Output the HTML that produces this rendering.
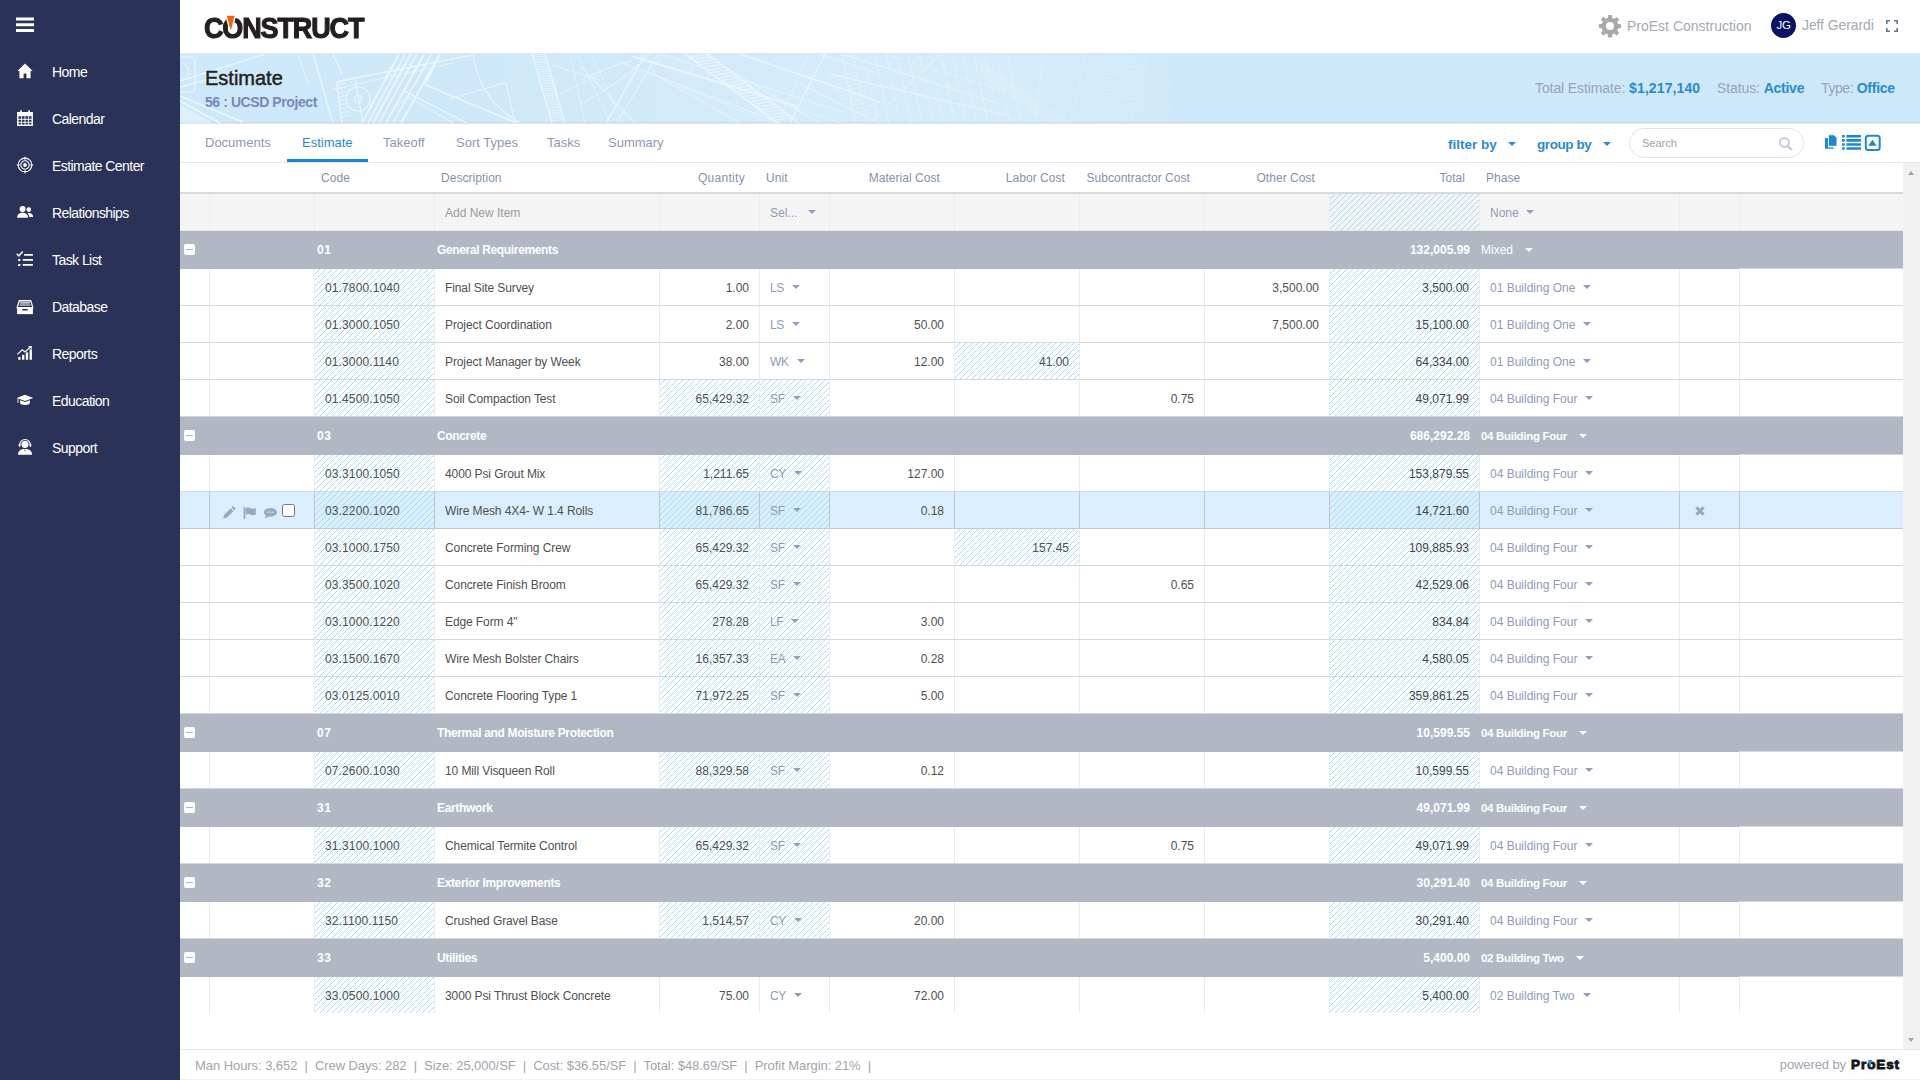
<!DOCTYPE html><html lang="en"><head><meta charset="utf-8"><title>Estimate - 56 : UCSD Project</title><style>
*{box-sizing:border-box;margin:0;padding:0}
html,body{width:1920px;height:1080px;overflow:hidden;background:#fff;font-family:"Liberation Sans",sans-serif;}
body{position:relative;color:#555}
.abs{position:absolute}
#side{position:absolute;left:0;top:0;width:180px;height:1080px;background:#2a3257}
.nav{position:absolute;left:0;width:180px;height:47px;color:#fff;font-size:14px;letter-spacing:-0.56px;line-height:47px}
.nav span{position:absolute;left:52px;top:0;white-space:nowrap}
.nav svg{position:absolute;left:16px;top:13px;width:18px;height:18px;fill:#fff}
#top{position:absolute;left:180px;top:0;width:1740px;height:54px;background:#fff;border-bottom:1px solid #e4e5e8}
#logo{position:absolute;left:24px;top:11px;font-weight:700;font-size:29px;line-height:34px;color:#231f20;letter-spacing:-1.2px;transform-origin:0 50%;transform:scaleX(.93);-webkit-text-stroke:1.1px #231f20;white-space:nowrap}
#banner{position:absolute;left:180px;top:54px;width:1740px;height:69px;background:#cde8f9;overflow:hidden;box-shadow:inset 0 -1px 0 #c3dcec}
#banner h1{position:absolute;left:25px;top:11px;font-size:20px;font-weight:400;color:#222;line-height:26px;-webkit-text-stroke:.45px #222;white-space:nowrap}
#banner h2{position:absolute;left:25px;top:38px;font-size:14px;font-weight:700;color:#7b86ba;line-height:20px;letter-spacing:-0.42px;white-space:nowrap}
.stat{position:absolute;top:24px;font-size:14px;line-height:20px;color:#98a2b8;white-space:nowrap;letter-spacing:-0.1px}
.stat b{color:#2b8ad2;font-weight:700;letter-spacing:-0.25px}
#tabs{position:absolute;left:180px;top:123px;width:1740px;height:40px;background:#fff;border-top:1px solid #e3e4e6;border-bottom:1px solid #e4e6ee}
.tab{position:absolute;top:-1px;height:39px;line-height:40px;font-size:13px;color:#8d99b3;white-space:nowrap}
.tab.on{color:#2b8ad2}
.tabline{position:absolute;top:35px;height:3px;background:#1b88d3}
.dd{position:absolute;top:0;line-height:41px;font-size:13.5px;font-weight:700;color:#2b8ad2;white-space:nowrap;letter-spacing:-0.3px}
.tri{display:inline-block;vertical-align:top;width:0;height:0;border-left:4px solid transparent;border-right:4px solid transparent;border-top:4px solid #919dba}
#search{position:absolute;left:1449px;top:4px;width:175px;height:30px;border:1px solid #dfe2ea;border-radius:15px;font-size:11px;color:#a3a3a3;line-height:28px;padding-left:12px}
#thead{position:absolute;left:180px;top:163px;width:1723px;height:31px;background:#fff;border-bottom:2px solid #d9d9d9}
.th{position:absolute;top:0;height:29px;line-height:30px;font-size:12px;color:#8491ad;white-space:nowrap;letter-spacing:.05px}
.row{position:absolute;left:180px;width:1723px;font-size:12px}
.cell{position:absolute;top:0;height:100%;border-right:1px solid #eaebee;white-space:nowrap;line-height:38px;color:#505050;overflow:visible}
.item{height:37px;border-bottom:1px solid #d4d7dc;background:#fff}
.item .cell{height:36px}
.hatch{background-image:repeating-linear-gradient(135deg,transparent 0,transparent 3.24px,#9fddf6 3.24px,#9fddf6 4.24px)}
.grp{height:38px;background:#b1b8c3;color:#fff;font-weight:700;line-height:39px;font-size:12px}
.grp span{position:absolute;top:0;white-space:nowrap;letter-spacing:-0.35px}
.grp .tail{position:absolute;left:1559px;top:37px;width:164px;height:1px;background:#d5d8de}
.minus{position:absolute;left:4px;top:13px;width:11px;height:11px;background:#fff;border-radius:2px}
.minus:after{content:"";position:absolute;left:2px;top:5px;width:7px;height:1.4px;background:#aeb5c0}
.num{text-align:right;padding-right:10px}
.txt{padding-left:10px}
.ph{color:#8e9bb8}
.ph .tri{margin:16px 0 0 8px}
.unit{letter-spacing:-0.3px}
.code{letter-spacing:.12px}
.desc{letter-spacing:-0.1px}
.last{border-bottom-color:transparent}
.hl{background:#daeefe;border-bottom-color:#c6c9cc}
.hl .cell{border-right-color:#bfc2c6}
#addrow{background:#f4f4f4;height:37px;border-bottom:1px solid #e9e9ea}
#addrow .cell{height:36px;border-right-color:#ececee;color:#9a9a9a}
#addrow .ph{color:#8e9bb8}
#vs{position:absolute;left:1903px;top:163px;width:17px;height:886px;background:#f1f1f1}
#foot{position:absolute;left:180px;top:1049px;width:1740px;height:31px;border-top:1px solid #e6e8ec;background:#fff;font-size:13px;color:#a1a4aa;line-height:30px;white-space:nowrap;letter-spacing:-0.06px;box-shadow:inset 0 -1px 0 #f0f0f0}
</style></head><body>
<div id="side">
<svg class="abs" style="left:16px;top:17px" width="18" height="16" viewBox="0 0 18 16"><path d="M0 2h18M0 7.700h18M0 13.500h18" stroke="#fff" stroke-width="3"/></svg>
<div class="nav" style="top:49px"><svg viewBox="0 0 20 20" overflow="visible"><g transform="translate(0 -.6) scale(1 1.09)"><path d="M10 2.2 1.5 9.6h2.3V17h4.6v-4.8h3.2V17h4.6V9.6h2.3z"/></g></svg><span>Home</span></div>
<div class="nav" style="top:96px"><svg viewBox="0 0 20 20" overflow="visible"><path d="M2 4h16v14H2z" fill="none" stroke="#fff" stroke-width="1.6"/><path d="M2 4h16v4H2z"/><path d="M5.5 1.5v4M14.5 1.5v4" stroke="#fff" stroke-width="1.8"/><path d="M6 8v10M10 8v10M14 8v10M2 11.5h16M2 14.8h16" stroke="#fff" stroke-width="1"/></svg><span>Calendar</span></div>
<div class="nav" style="top:143px"><svg viewBox="0 0 20 20" overflow="visible"><circle cx="10" cy="10" r="7.600" fill="none" stroke="#fff" stroke-width="1.200"/><circle cx="10" cy="10" r="4.700" fill="none" stroke="#fff" stroke-width="1.200"/><circle cx="10" cy="10" r="2.100"/><path d="M10 .8v3.400M10 15.800v3.400M.8 10h3.400M15.800 10h3.400" stroke="#fff" stroke-width="1.300"/></svg><span>Estimate Center</span></div>
<div class="nav" style="top:190px"><svg viewBox="0 0 20 20" overflow="visible"><circle cx="7.3" cy="6.6" r="3.3"/><path d="M1.2 16.5c0-4.2 2.6-5.8 6.1-5.8s6.1 1.6 6.1 5.8z"/><circle cx="14.2" cy="7.3" r="2.6"/><path d="M14.4 11c2.8 0 4.6 1.5 4.6 4.6h-4.4c0-1.9-.6-3.3-1.8-4.3.5-.2 1-.3 1.6-.3z"/></svg><span>Relationships</span></div>
<div class="nav" style="top:237px"><svg viewBox="0 0 20 20" overflow="visible"><g transform="translate(0 1.2)"><path d="M9 4.200h9.800M7.500 9.800h11.300M7.500 15.400h11.300" stroke="#fff" stroke-width="1.900"/><path d="M.8 3l2.400 2.400 4.200-5" fill="none" stroke="#fff" stroke-width="1.700"/><rect x="2.4" y="8.7" width="2.4" height="2.4"/><rect x="2.4" y="14.3" width="2.4" height="2.4"/></g></svg><span>Task List</span></div>
<div class="nav" style="top:284px"><svg viewBox="0 0 20 20" overflow="visible"><g transform="translate(0 1) scale(1 1.06)"><path d="M3.6 3h12.8l2.3 7.2H1.3z" fill="none" stroke="#fff" stroke-width="1.4"/><path d="M4.6 5.2h10.8M4 7.4h12" stroke="#fff" stroke-width="1.2"/><path d="M1.2 10h17.6v7H1.2z"/><rect x="7" y="11.6" width="6" height="1.6" fill="#2a3257"/></g></svg><span>Database</span></div>
<div class="nav" style="top:331px"><svg viewBox="0 0 20 20" overflow="visible"><rect x="2.5" y="14.4" width="2.6" height="3.1"/><rect x="6.7" y="12" width="2.6" height="5.5"/><rect x="10.9" y="9.4" width="2.6" height="8.1"/><rect x="15.1" y="6" width="2.6" height="11.5"/><path d="M1.5 11.6 7 6.4l3 2.4 6.6-6" fill="none" stroke="#fff" stroke-width="1.3"/><path d="M13.5 2.2h4v4z"/></svg><span>Reports</span></div>
<div class="nav" style="top:378px"><svg viewBox="0 0 20 20" overflow="visible"><path d="M10 4.2 0.8 7.7 10 11.2l9.2-3.5z"/><path d="M4.6 10.2v3.2c0 1.2 2.4 2.2 5.4 2.2s5.4-1 5.4-2.2v-3.2L10 12.3z"/><path d="M2.2 8.4v4.8" stroke="#fff" stroke-width="1"/></svg><span>Education</span></div>
<div class="nav" style="top:425px"><svg viewBox="0 0 20 20" overflow="visible"><circle cx="10" cy="7" r="4"/><path d="M2.2 18.5c0-4.4 3.2-6.3 7.8-6.3s7.8 1.9 7.8 6.3z"/><path d="M4.2 7.4a5.8 5.8 0 0 1 11.6 0" fill="none" stroke="#fff" stroke-width="1.2"/><rect x="3" y="6.4" width="2" height="3.4" rx=".8"/><rect x="15" y="6.4" width="2" height="3.4" rx=".8"/><path d="M9.2 13l.8 2.6.8-2.6z" fill="#2a3257"/></svg><span>Support</span></div>
</div>
<div id="top"><div id="logo">CONSTRUCT</div>
<svg class="abs" style="left:45px;top:14px" width="12" height="17" viewBox="0 0 12 17"><path d="M1.6 1.600h8.200L6.400 15.600h-1.200z" fill="#fff" stroke="#fff" stroke-width="2.400" stroke-linejoin="round"/><path d="M1.800 1.700h7.800L6.200 15.200h-.9z" fill="#f4640f"/></svg>
<svg class="abs" style="left:1418px;top:14px" width="24" height="24" viewBox="0 0 24 24"><path fill="#a9a9a9" d="M10.2 1h3.6l.5 3.1 1.9.8 2.5-1.9 2.5 2.5-1.9 2.5.8 1.9 3.1.5v3.6l-3.1.5-.8 1.9 1.9 2.5-2.5 2.5-2.5-1.9-1.9.8-.5 3.1h-3.6l-.5-3.1-1.9-.8-2.5 1.9-2.5-2.5 1.9-2.5-.8-1.9L.8 13.8v-3.6l3.1-.5.8-1.9-1.9-2.5 2.5-2.5 2.5 1.9 1.9-.8zM12 8a4 4 0 1 0 0 8 4 4 0 0 0 0-8z"/></svg>
<div class="abs" style="left:1447px;top:15px;font-size:14px;line-height:22px;color:#a4a9b3;white-space:nowrap">ProEst Construction</div>
<div class="abs" style="left:1591px;top:13px;width:25px;height:25px;border-radius:50%;background:#0b1367;color:#fff;font-size:11.5px;line-height:25px;text-align:center;letter-spacing:-0.3px">JG</div>
<div class="abs" style="left:1622px;top:14px;font-size:14px;line-height:22px;color:#a4a9b3;letter-spacing:-0.1px;white-space:nowrap">Jeff Gerardi</div>
<svg class="abs" style="left:1706px;top:20px" width="12" height="12" viewBox="0 0 12 12"><path d="M.8 4V.8H4M8 .8h3.2V4M11.2 8v3.2H8M4 11.2H.8V8" fill="none" stroke="#68738e" stroke-width="1.6"/></svg>
</div>
<div id="banner">
<svg class="abs" style="left:0;top:0" width="996" height="69" viewBox="0 0 996 69"><defs><linearGradient id="fd" x1="0" x2="1"><stop offset="0" stop-color="#fff" stop-opacity=".66"/><stop offset=".5" stop-color="#fff" stop-opacity=".6"/><stop offset=".85" stop-color="#fff" stop-opacity=".42"/><stop offset="1" stop-color="#fff" stop-opacity=".22"/></linearGradient><mask id="mk"><rect width="996" height="69" fill="url(#fd)"/></mask></defs><linearGradient id="ws" x1="0" x2="1"><stop offset=".25" stop-color="#fff" stop-opacity="0"/><stop offset=".5" stop-color="#fff" stop-opacity=".1"/><stop offset=".8" stop-color="#fff" stop-opacity=".14"/><stop offset="1" stop-color="#fff" stop-opacity=".06"/></linearGradient><rect width="992" height="69" fill="url(#ws)"/><polygon points="0,50.500 33,69 0,69" fill="#fff" fill-opacity=".35"/><g fill="none" stroke="#fff" mask="url(#mk)"><path d="M0.0 27.0L85.0 0.0" stroke-width="1.375"/><path d="M0.0 33.0L61.0 16.6" stroke-width="1.375"/><path d="M0.0 42.0L63.0 68.0" stroke-width="1.375"/><path d="M0.0 47.0L40.0 69.0" stroke-width="1.75"/><path d="M-4 3h15a4 4 0 0 1 4 4v27a4 4 0 0 1-4 4h-15" stroke-width="1.2"/><path d="M2 8q8 4 6 14" stroke-width="1"/><path d="M133.0 0.0L153.0 69.0" stroke-width="1.375"/><path d="M153.0 0.0L162.0 20.0" stroke-width="1.375"/><path d="M118.0 0.0L128.0 30.0" stroke-width="1.0" stroke-opacity="0.7"/><path d="M156.500 28.600 175 24 183 69M156.500 28.600 162 69" stroke-width="1.3"/><path d="M157.0 31.0L166.0 29.0" stroke-width="1.125" stroke-opacity="0.8"/><path d="M157.6 35.0L166.6 33.0" stroke-width="1.125" stroke-opacity="0.8"/><path d="M158.1 39.0L167.1 37.0" stroke-width="1.125" stroke-opacity="0.8"/><path d="M158.7 43.0L167.7 41.0" stroke-width="1.125" stroke-opacity="0.8"/><path d="M159.2 47.0L168.2 45.0" stroke-width="1.125" stroke-opacity="0.8"/><path d="M159.8 51.0L168.8 49.0" stroke-width="1.125" stroke-opacity="0.8"/><path d="M160.3 55.0L169.3 53.0" stroke-width="1.125" stroke-opacity="0.8"/><path d="M160.9 59.0L169.9 57.0" stroke-width="1.125" stroke-opacity="0.8"/><path d="M161.4 63.0L170.4 61.0" stroke-width="1.125" stroke-opacity="0.8"/><path d="M166 45a12 12 0 1 0 24 0a12 12 0 1 0-24 0M174.500 45a3.500 3.500 0 1 0 7 0a3.500 3.500 0 1 0-7 0" stroke-width="1.2"/><path d="M182.0 69.0L219.0 0.0" stroke-width="1.875"/><path d="M188.0 69.0L225.3 0.0" stroke-width="1.5"/><path d="M193.0 69.0L230.6 0.0" stroke-width="1.875"/><path d="M199.0 69.0L236.8 0.0" stroke-width="1.5"/><path d="M206.0 69.0L244.2 0.0" stroke-width="1.875"/><path d="M213.0 69.0L251.6 0.0" stroke-width="1.5"/><path d="M221.0 69.0L259.9 0.0" stroke-width="1.875"/><path d="M157.5 27.5L291.0 1.3" stroke-width="1.375"/><path d="M153.0 35.0L273.5 9.0" stroke-width="1.125" stroke-opacity="0.8"/><path d="M245.0 30.8L260.0 1.3" stroke-width="1.375"/><path d="M245.0 30.8L337.0 69.0" stroke-width="1.625"/><path d="M225.0 37.4L286.6 69.0" stroke-width="1.375"/><path d="M216.600 52.700 227.500 42.900 273.500 69" stroke-width="1"/><path d="M293 0Q300 48 341 69" stroke-width="1.1"/><path d="M269 45 326 28.600 335 69" stroke-width="1"/><path d="M352 0 372 69M365 0 385 69" stroke-width="1.3"/><path d="M353.0 1.0L365.0 -0.5" stroke-width="0.875" stroke-opacity="0.8"/><path d="M353.7 3.4L365.7 1.9" stroke-width="0.875" stroke-opacity="0.8"/><path d="M354.4 5.9L366.4 4.4" stroke-width="0.875" stroke-opacity="0.8"/><path d="M355.1 8.3L367.1 6.8" stroke-width="0.875" stroke-opacity="0.8"/><path d="M355.9 10.7L367.9 9.2" stroke-width="0.875" stroke-opacity="0.8"/><path d="M356.6 13.1L368.6 11.6" stroke-width="0.875" stroke-opacity="0.8"/><path d="M357.3 15.6L369.3 14.1" stroke-width="0.875" stroke-opacity="0.8"/><path d="M358.0 18.0L370.0 16.5" stroke-width="0.875" stroke-opacity="0.8"/><path d="M358.7 20.4L370.7 18.9" stroke-width="0.875" stroke-opacity="0.8"/><path d="M359.4 22.9L371.4 21.4" stroke-width="0.875" stroke-opacity="0.8"/><path d="M360.1 25.3L372.1 23.8" stroke-width="0.875" stroke-opacity="0.8"/><path d="M360.9 27.7L372.9 26.2" stroke-width="0.875" stroke-opacity="0.8"/><path d="M361.6 30.1L373.6 28.6" stroke-width="0.875" stroke-opacity="0.8"/><path d="M362.3 32.6L374.3 31.1" stroke-width="0.875" stroke-opacity="0.8"/><path d="M363.0 35.0L375.0 33.5" stroke-width="0.875" stroke-opacity="0.8"/><path d="M363.7 37.4L375.7 35.9" stroke-width="0.875" stroke-opacity="0.8"/><path d="M364.4 39.9L376.4 38.4" stroke-width="0.875" stroke-opacity="0.8"/><path d="M365.1 42.3L377.1 40.8" stroke-width="0.875" stroke-opacity="0.8"/><path d="M365.9 44.7L377.9 43.2" stroke-width="0.875" stroke-opacity="0.8"/><path d="M366.6 47.1L378.6 45.6" stroke-width="0.875" stroke-opacity="0.8"/><path d="M367.3 49.6L379.3 48.1" stroke-width="0.875" stroke-opacity="0.8"/><path d="M368.0 52.0L380.0 50.5" stroke-width="0.875" stroke-opacity="0.8"/><path d="M368.7 54.4L380.7 52.9" stroke-width="0.875" stroke-opacity="0.8"/><path d="M369.4 56.9L381.4 55.4" stroke-width="0.875" stroke-opacity="0.8"/><path d="M370.1 59.3L382.1 57.8" stroke-width="0.875" stroke-opacity="0.8"/><path d="M370.9 61.7L382.9 60.2" stroke-width="0.875" stroke-opacity="0.8"/><path d="M371.6 64.1L383.6 62.6" stroke-width="0.875" stroke-opacity="0.8"/><path d="M372.3 66.6L384.3 65.1" stroke-width="0.875" stroke-opacity="0.8"/><path d="M372.0 11.0L420.0 26.0" stroke-width="1.125" stroke-opacity="0.8"/><path d="M380.0 40.0L420.0 20.0" stroke-width="1.125" stroke-opacity="0.7"/><path d="M390.0 0.0L405.0 69.0" stroke-width="1.0" stroke-opacity="0.7"/><path d="M398.0 0.0L430.0 69.0" stroke-width="1.0" stroke-opacity="0.6"/><path d="M400 26Q430 12 452.500 6.700" stroke-width="1"/><path d="M400 50Q440 30 470 0" stroke-width="1"/><path d="M426.0 69.0L465.6 0.0" stroke-width="1.5"/><path d="M437.0 69.0L478.0 0.0" stroke-width="1.125" stroke-opacity="0.8"/><path d="M452.5 2.4L619.0 52.7" stroke-width="1.625"/><path d="M440.0 8.0L600.0 69.0" stroke-width="1.125" stroke-opacity="0.8"/><path d="M470.0 18.0L560.0 69.0" stroke-width="1.125" stroke-opacity="0.7"/><path d="M505 0 597 69M527 0 619 69" stroke-width="1.5"/><path d="M506.0 0.0L526.0 -3.0" stroke-width="1.375" stroke-opacity="0.75"/><path d="M509.5 2.7L529.5 -0.3" stroke-width="1.375" stroke-opacity="0.75"/><path d="M513.1 5.3L533.1 2.3" stroke-width="1.375" stroke-opacity="0.75"/><path d="M516.6 8.0L536.6 5.0" stroke-width="1.375" stroke-opacity="0.75"/><path d="M520.2 10.6L540.2 7.6" stroke-width="1.375" stroke-opacity="0.75"/><path d="M523.7 13.3L543.7 10.3" stroke-width="1.375" stroke-opacity="0.75"/><path d="M527.2 15.9L547.2 12.9" stroke-width="1.375" stroke-opacity="0.75"/><path d="M530.8 18.6L550.8 15.6" stroke-width="1.375" stroke-opacity="0.75"/><path d="M534.3 21.2L554.3 18.2" stroke-width="1.375" stroke-opacity="0.75"/><path d="M537.8 23.9L557.8 20.9" stroke-width="1.375" stroke-opacity="0.75"/><path d="M541.4 26.5L561.4 23.5" stroke-width="1.375" stroke-opacity="0.75"/><path d="M544.9 29.2L564.9 26.2" stroke-width="1.375" stroke-opacity="0.75"/><path d="M548.5 31.8L568.5 28.8" stroke-width="1.375" stroke-opacity="0.75"/><path d="M552.0 34.5L572.0 31.5" stroke-width="1.375" stroke-opacity="0.75"/><path d="M555.5 37.2L575.5 34.2" stroke-width="1.375" stroke-opacity="0.75"/><path d="M559.1 39.8L579.1 36.8" stroke-width="1.375" stroke-opacity="0.75"/><path d="M562.6 42.5L582.6 39.5" stroke-width="1.375" stroke-opacity="0.75"/><path d="M566.2 45.1L586.2 42.1" stroke-width="1.375" stroke-opacity="0.75"/><path d="M569.7 47.8L589.7 44.8" stroke-width="1.375" stroke-opacity="0.75"/><path d="M573.2 50.4L593.2 47.4" stroke-width="1.375" stroke-opacity="0.75"/><path d="M576.8 53.1L596.8 50.1" stroke-width="1.375" stroke-opacity="0.75"/><path d="M580.3 55.7L600.3 52.7" stroke-width="1.375" stroke-opacity="0.75"/><path d="M583.8 58.4L603.8 55.4" stroke-width="1.375" stroke-opacity="0.75"/><path d="M587.4 61.0L607.4 58.0" stroke-width="1.375" stroke-opacity="0.75"/><path d="M590.9 63.7L610.9 60.7" stroke-width="1.375" stroke-opacity="0.75"/><path d="M594.5 66.3L614.5 63.3" stroke-width="1.375" stroke-opacity="0.75"/><path d="M560.0 0.0L700.0 48.0" stroke-width="1.5"/><path d="M540.0 10.0L640.0 69.0" stroke-width="1.125" stroke-opacity="0.7"/><path d="M610.0 69.0L645.0 0.0" stroke-width="1.375"/><path d="M598.0 69.0L628.0 0.0" stroke-width="1.0" stroke-opacity="0.7"/><path d="M620.0 30.0L700.0 69.0" stroke-width="1.125" stroke-opacity="0.7"/><path d="M640.0 0.0L700.0 20.0" stroke-width="1.125" stroke-opacity="0.7"/><path d="M662.0 0.0L676.0 69.0" stroke-width="1.0" stroke-opacity="0.8"/><path d="M673.0 0.0L687.0 69.0" stroke-width="1.0" stroke-opacity="0.55"/><path d="M684.0 0.0L698.0 69.0" stroke-width="1.0" stroke-opacity="0.55"/><path d="M695.0 0.0L709.0 69.0" stroke-width="1.0" stroke-opacity="0.8"/><path d="M706.0 0.0L720.0 69.0" stroke-width="1.0" stroke-opacity="0.55"/><path d="M717.0 0.0L731.0 69.0" stroke-width="1.0" stroke-opacity="0.55"/><path d="M728.0 0.0L742.0 69.0" stroke-width="1.0" stroke-opacity="0.8"/><path d="M739.0 0.0L753.0 69.0" stroke-width="1.0" stroke-opacity="0.55"/><path d="M750.0 0.0L764.0 69.0" stroke-width="1.0" stroke-opacity="0.55"/><path d="M761.0 0.0L775.0 69.0" stroke-width="1.0" stroke-opacity="0.8"/><path d="M772.0 0.0L786.0 69.0" stroke-width="1.0" stroke-opacity="0.55"/><path d="M783.0 0.0L797.0 69.0" stroke-width="1.0" stroke-opacity="0.55"/><path d="M794.0 0.0L808.0 69.0" stroke-width="1.0" stroke-opacity="0.8"/><path d="M805.0 0.0L819.0 69.0" stroke-width="1.0" stroke-opacity="0.55"/><path d="M816.0 0.0L830.0 69.0" stroke-width="1.0" stroke-opacity="0.55"/><path d="M827.0 0.0L841.0 69.0" stroke-width="1.0" stroke-opacity="0.8"/><path d="M650.0 20.0L830.0 62.0" stroke-width="1.375" stroke-opacity="0.8"/><path d="M662.0 0.0L820.0 50.0" stroke-width="1.75" stroke-opacity="0.7"/><path d="M690.0 69.0L760.0 0.0" stroke-width="1.125" stroke-opacity="0.6"/><path d="M648.0 24.0L676.0 18.0" stroke-width="0.875" stroke-opacity="0.6"/><path d="M650.2 27.6L678.2 21.6" stroke-width="0.875" stroke-opacity="0.6"/><path d="M652.4 31.2L680.4 25.2" stroke-width="0.875" stroke-opacity="0.6"/><path d="M654.6 34.8L682.6 28.8" stroke-width="0.875" stroke-opacity="0.6"/><path d="M656.8 38.4L684.8 32.4" stroke-width="0.875" stroke-opacity="0.6"/><path d="M659.0 42.0L687.0 36.0" stroke-width="0.875" stroke-opacity="0.6"/><path d="M661.2 45.6L689.2 39.6" stroke-width="0.875" stroke-opacity="0.6"/><path d="M663.4 49.2L691.4 43.2" stroke-width="0.875" stroke-opacity="0.6"/><path d="M665.6 52.8L693.6 46.8" stroke-width="0.875" stroke-opacity="0.6"/><path d="M667.8 56.4L695.8 50.4" stroke-width="0.875" stroke-opacity="0.6"/><path d="M670.0 60.0L698.0 54.0" stroke-width="0.875" stroke-opacity="0.6"/><path d="M672.2 63.6L700.2 57.6" stroke-width="0.875" stroke-opacity="0.6"/><path d="M400.0 12.0L455.0 69.0" stroke-width="1.125" stroke-opacity="0.7"/><path d="M412.0 0.0L442.0 69.0" stroke-width="1.0" stroke-opacity="0.6"/><path d="M480.0 0.0L664.0 58.0" stroke-width="1.125" stroke-opacity="0.7"/><path d="M500.0 32.0L590.0 69.0" stroke-width="1.0" stroke-opacity="0.6"/><path d="M705.0 0.0L820.0 36.0" stroke-width="1.125" stroke-opacity="0.6"/><path d="M730.0 69.0L800.0 14.0" stroke-width="1.0" stroke-opacity="0.5"/><path d="M575.0 40.0L660.0 69.0" stroke-width="1.0" stroke-opacity="0.6"/><path d="M460.0 4.7L463.0 -2.3" stroke-width="1.125" stroke-opacity="0.7"/><path d="M476.7 9.7L479.7 2.7" stroke-width="1.125" stroke-opacity="0.7"/><path d="M493.3 14.7L496.3 7.7" stroke-width="1.125" stroke-opacity="0.7"/><path d="M510.0 19.7L513.0 12.7" stroke-width="1.125" stroke-opacity="0.7"/><path d="M526.7 24.7L529.7 17.7" stroke-width="1.125" stroke-opacity="0.7"/><path d="M543.3 29.7L546.3 22.7" stroke-width="1.125" stroke-opacity="0.7"/><path d="M560.0 34.7L563.0 27.7" stroke-width="1.125" stroke-opacity="0.7"/><path d="M576.7 39.7L579.7 32.7" stroke-width="1.125" stroke-opacity="0.7"/><path d="M593.3 44.7L596.3 37.7" stroke-width="1.125" stroke-opacity="0.7"/><path d="M668.0 2.0L670.5 -4.0" stroke-width="1.0" stroke-opacity="0.6"/><path d="M688.0 8.3L690.5 2.3" stroke-width="1.0" stroke-opacity="0.6"/><path d="M708.0 14.6L710.5 8.6" stroke-width="1.0" stroke-opacity="0.6"/><path d="M728.0 20.9L730.5 14.9" stroke-width="1.0" stroke-opacity="0.6"/><path d="M748.0 27.1L750.5 21.1" stroke-width="1.0" stroke-opacity="0.6"/><path d="M768.0 33.4L770.5 27.4" stroke-width="1.0" stroke-opacity="0.6"/><path d="M788.0 39.7L790.5 33.7" stroke-width="1.0" stroke-opacity="0.6"/><path d="M800 6 892 69 868 69 800 22z" fill="#fff" fill-opacity="0.32" stroke="none"/><path d="M863.5 0.0L855.0 69.0" stroke-width="1.125" stroke-opacity="0.6"/><path d="M906.0 0.0L890.0 69.0" stroke-width="1.125" stroke-opacity="0.6"/><path d="M800.0 30.0L905.0 0.0" stroke-width="1.125" stroke-opacity="0.5"/><path d="M820.0 69.0L960.0 10.0" stroke-width="1.125" stroke-opacity="0.45"/><path d="M905.0 6.0L968.0 0.0" stroke-width="0.875" stroke-opacity="0.5"/><path d="M905.0 10.0L968.0 4.0" stroke-width="0.875" stroke-opacity="0.5"/><path d="M905.0 14.0L968.0 8.0" stroke-width="0.875" stroke-opacity="0.5"/><path d="M905.0 18.0L968.0 12.0" stroke-width="0.875" stroke-opacity="0.5"/><path d="M905.0 22.0L968.0 16.0" stroke-width="0.875" stroke-opacity="0.5"/><path d="M905.0 26.0L968.0 20.0" stroke-width="0.875" stroke-opacity="0.5"/><path d="M905.0 30.0L968.0 24.0" stroke-width="0.875" stroke-opacity="0.5"/><path d="M905.0 34.0L968.0 28.0" stroke-width="0.875" stroke-opacity="0.5"/><path d="M905.0 38.0L968.0 32.0" stroke-width="0.875" stroke-opacity="0.5"/><path d="M905.0 42.0L968.0 36.0" stroke-width="0.875" stroke-opacity="0.5"/><path d="M905.0 46.0L968.0 40.0" stroke-width="0.875" stroke-opacity="0.5"/><path d="M905.0 50.0L968.0 44.0" stroke-width="0.875" stroke-opacity="0.5"/><path d="M905.0 54.0L968.0 48.0" stroke-width="0.875" stroke-opacity="0.5"/><path d="M905.0 58.0L968.0 52.0" stroke-width="0.875" stroke-opacity="0.5"/><path d="M905.0 62.0L968.0 56.0" stroke-width="0.875" stroke-opacity="0.5"/><path d="M905.0 66.0L968.0 60.0" stroke-width="0.875" stroke-opacity="0.5"/><path d="M968.0 0.0L950.0 69.0" stroke-width="1.125" stroke-opacity="0.5"/><path d="M985.0 0.0L972.0 69.0" stroke-width="1.125" stroke-opacity="0.45"/><path d="M930.0 40.0L992.0 55.0" stroke-width="1.125" stroke-opacity="0.4"/><path d="M940.0 69.0L992.0 30.0" stroke-width="1.0" stroke-opacity="0.4"/></g></svg>
<h1>Estimate</h1><h2>56 : UCSD Project</h2>
<div class="stat" style="left:1355px">Total Estimate: <b style="letter-spacing:.1px">$1,217,140</b></div>
<div class="stat" style="left:1537px">Status: <b>Active</b></div>
<div class="stat" style="left:1641px;letter-spacing:-0.4px">Type: <b>Office</b></div>
</div>
<div id="tabs">
<div class="tab" style="left:25px">Documents</div>
<div class="tab on" style="left:122px">Estimate</div>
<div class="tab" style="left:203px">Takeoff</div>
<div class="tab" style="left:276px">Sort Types</div>
<div class="tab" style="left:367px">Tasks</div>
<div class="tab" style="left:428px">Summary</div>
<div class="tabline" style="left:107px;width:81px"></div>
<div class="dd" style="left:1268px;letter-spacing:0">filter by</div><div class="tri abs" style="left:1328px;top:18px;border-top-color:#2b8ad2"></div>
<div class="dd" style="left:1357px;letter-spacing:-0.42px">group by</div><div class="tri abs" style="left:1423px;top:18px;border-top-color:#2b8ad2"></div>
<div id="search">Search<svg class="abs" style="left:148px;top:8px" width="16" height="15" viewBox="0 0 16 15"><circle cx="6.400" cy="5.500" r="4.500" fill="none" stroke="#c7cdd9" stroke-width="2"/><path d="M9.800 9l3.600 3.400" stroke="#c7cdd9" stroke-width="2.300" stroke-linecap="round"/></svg></div>
<svg class="abs" style="left:1645px;top:10px" width="57" height="18" viewBox="0 0 57 18"><g fill="#1b88d3"><path d="M0 4h3v9.600h5.800v1.200H0z"/><path d="M3.400 .8h5.600l3 3v8.500H3.400z" stroke="#fff" stroke-width=".9"/><path d="M3.400 4h-3.400v10.800h8.800v-2.500" fill="none"/><path d="M17 1h2.700v2.500H17zM21.400 1H36v2.500H21.400zM17 5.100h2.700v2.600H17zM21.400 5.100H36v2.600H21.400zM17 9.200h2.700v2.500H17zM21.400 9.200H36v2.500H21.400zM17 13.300h2.700v2.400H17zM21.400 13.300H36v2.400H21.400z"/><path d="M43.200 11.800h8.500l-4.250-6z"/></g><rect x="40.800" y="1.800" width="13.900" height="14.200" rx="2.500" fill="none" stroke="#1b88d3" stroke-width="2"/></svg>
</div>
<div id="thead">
<div class="th" style="left:141px">Code</div>
<div class="th" style="left:261px">Description</div>
<div class="th" style="right:1158px;letter-spacing:.3px">Quantity</div>
<div class="th" style="left:586px">Unit</div>
<div class="th" style="right:963px">Material Cost</div>
<div class="th" style="right:838px">Labor Cost</div>
<div class="th" style="right:713px">Subcontractor Cost</div>
<div class="th" style="right:588px">Other Cost</div>
<div class="th" style="right:438px">Total</div>
<div class="th" style="left:1306px">Phase</div>
</div>
<div class="row" id="addrow" style="top:194px">
<div class="cell " style="left:0px;width:30px;"></div><div class="cell " style="left:30px;width:105px;"></div><div class="cell " style="left:135px;width:120px;"></div>
<div class="cell txt" style="left:255px;width:225px;">Add New Item</div>
<div class="cell " style="left:480px;width:100px;"></div>
<div class="cell txt ph" style="left:580px;width:70px;">Sel...<i class="tri" style="margin-left:11px"></i></div>
<div class="cell " style="left:650px;width:125px;"></div><div class="cell " style="left:775px;width:125px;"></div><div class="cell " style="left:900px;width:125px;"></div><div class="cell " style="left:1025px;width:125px;"></div>
<div class="cell hatch" style="left:1150px;width:150px;"></div>
<div class="cell txt ph" style="left:1300px;width:200px;">None<i class="tri" style="margin-left:7px"></i></div>
<div class="cell " style="left:1500px;width:60px;"></div><div class="cell " style="left:1560px;width:164px;border-right:0"></div>
</div>
<div class="row grp" style="top:231px"><i class="minus"></i><span style="left:137px;letter-spacing:.5px">01</span><span style="left:257px">General Requirements</span><span style="right:433px;letter-spacing:0">132,005.99</span><span style="left:1301px;font-weight:400;letter-spacing:0">Mixed<i class="tri" style="border-top-color:#fff;margin:17px 0 0 12px"></i></span><i class="tail"></i></div>
<div class="row item" style="top:269px">
<div class="cell " style="left:0px;width:30px;"></div>
<div class="cell " style="left:30px;width:105px;"></div>
<div class="cell txt hatch code" style="left:135px;width:120px;">01.7800.1040</div>
<div class="cell txt desc" style="left:255px;width:225px;">Final Site Survey</div>
<div class="cell num" style="left:480px;width:100px;">1.00</div>
<div class="cell txt ph unit" style="left:580px;width:70px;">LS<i class="tri"></i></div>
<div class="cell num" style="left:650px;width:125px;"></div>
<div class="cell num" style="left:775px;width:125px;"></div>
<div class="cell num" style="left:900px;width:125px;"></div><div class="cell num" style="left:1025px;width:125px;">3,500.00</div>
<div class="cell num hatch" style="left:1150px;width:150px;color:#444">3,500.00</div>
<div class="cell txt ph" style="left:1300px;width:200px;">01 Building One<i class="tri"></i></div>
<div class="cell " style="left:1500px;width:60px;"></div><div class="cell " style="left:1560px;width:164px;border-right:0"></div>
</div>
<div class="row item" style="top:306px">
<div class="cell " style="left:0px;width:30px;"></div>
<div class="cell " style="left:30px;width:105px;"></div>
<div class="cell txt hatch code" style="left:135px;width:120px;">01.3000.1050</div>
<div class="cell txt desc" style="left:255px;width:225px;">Project Coordination</div>
<div class="cell num" style="left:480px;width:100px;">2.00</div>
<div class="cell txt ph unit" style="left:580px;width:70px;">LS<i class="tri"></i></div>
<div class="cell num" style="left:650px;width:125px;">50.00</div>
<div class="cell num" style="left:775px;width:125px;"></div>
<div class="cell num" style="left:900px;width:125px;"></div><div class="cell num" style="left:1025px;width:125px;">7,500.00</div>
<div class="cell num hatch" style="left:1150px;width:150px;color:#444">15,100.00</div>
<div class="cell txt ph" style="left:1300px;width:200px;">01 Building One<i class="tri"></i></div>
<div class="cell " style="left:1500px;width:60px;"></div><div class="cell " style="left:1560px;width:164px;border-right:0"></div>
</div>
<div class="row item" style="top:343px">
<div class="cell " style="left:0px;width:30px;"></div>
<div class="cell " style="left:30px;width:105px;"></div>
<div class="cell txt hatch code" style="left:135px;width:120px;">01.3000.1140</div>
<div class="cell txt desc" style="left:255px;width:225px;">Project Manager by Week</div>
<div class="cell num" style="left:480px;width:100px;">38.00</div>
<div class="cell txt ph unit" style="left:580px;width:70px;">WK<i class="tri"></i></div>
<div class="cell num" style="left:650px;width:125px;">12.00</div>
<div class="cell num hatch" style="left:775px;width:125px;">41.00</div>
<div class="cell num" style="left:900px;width:125px;"></div><div class="cell num" style="left:1025px;width:125px;"></div>
<div class="cell num hatch" style="left:1150px;width:150px;color:#444">64,334.00</div>
<div class="cell txt ph" style="left:1300px;width:200px;">01 Building One<i class="tri"></i></div>
<div class="cell " style="left:1500px;width:60px;"></div><div class="cell " style="left:1560px;width:164px;border-right:0"></div>
</div>
<div class="row item" style="top:380px">
<div class="cell " style="left:0px;width:30px;"></div>
<div class="cell " style="left:30px;width:105px;"></div>
<div class="cell txt hatch code" style="left:135px;width:120px;">01.4500.1050</div>
<div class="cell txt desc" style="left:255px;width:225px;">Soil Compaction Test</div>
<div class="cell num hatch" style="left:480px;width:100px;">65,429.32</div>
<div class="cell txt ph unit hatch" style="left:580px;width:70px;">SF<i class="tri"></i></div>
<div class="cell num" style="left:650px;width:125px;"></div>
<div class="cell num" style="left:775px;width:125px;"></div>
<div class="cell num" style="left:900px;width:125px;">0.75</div><div class="cell num" style="left:1025px;width:125px;"></div>
<div class="cell num hatch" style="left:1150px;width:150px;color:#444">49,071.99</div>
<div class="cell txt ph" style="left:1300px;width:200px;">04 Building Four<i class="tri"></i></div>
<div class="cell " style="left:1500px;width:60px;"></div><div class="cell " style="left:1560px;width:164px;border-right:0"></div>
</div>
<div class="row grp" style="top:417px"><i class="minus"></i><span style="left:137px;letter-spacing:.5px">03</span><span style="left:257px">Concrete</span><span style="right:433px;letter-spacing:0">686,292.28</span><span style="left:1301px;font-size:11.5px;letter-spacing:-0.3px">04 Building Four<i class="tri" style="border-top-color:#fff;margin:17px 0 0 12px"></i></span><i class="tail"></i></div>
<div class="row item" style="top:455px">
<div class="cell " style="left:0px;width:30px;"></div>
<div class="cell " style="left:30px;width:105px;"></div>
<div class="cell txt hatch code" style="left:135px;width:120px;">03.3100.1050</div>
<div class="cell txt desc" style="left:255px;width:225px;">4000 Psi Grout Mix</div>
<div class="cell num hatch" style="left:480px;width:100px;">1,211.65</div>
<div class="cell txt ph unit hatch" style="left:580px;width:70px;">CY<i class="tri"></i></div>
<div class="cell num" style="left:650px;width:125px;">127.00</div>
<div class="cell num" style="left:775px;width:125px;"></div>
<div class="cell num" style="left:900px;width:125px;"></div><div class="cell num" style="left:1025px;width:125px;"></div>
<div class="cell num hatch" style="left:1150px;width:150px;color:#444">153,879.55</div>
<div class="cell txt ph" style="left:1300px;width:200px;">04 Building Four<i class="tri"></i></div>
<div class="cell " style="left:1500px;width:60px;"></div><div class="cell " style="left:1560px;width:164px;border-right:0"></div>
</div>
<div class="row item hl" style="top:492px">
<div class="cell " style="left:0px;width:30px;"></div>
<div class="cell " style="left:30px;width:105px;"><svg class="abs" style="left:13px;top:14px" width="58" height="14" viewBox="0 0 58 14"><g fill="#9aa7c0"><path d="M.3 12.400l.7-3.500L7.700 2.200l2.800 2.800-6.700 6.700zM8.500 1.400l.8-.8a1 1 0 0 1 1.400 0l1.400 1.400a1 1 0 0 1 0 1.400l-.8.8z"/><path d="M20.600 1h1.800v12h-1.800zM22.8 2.2c2-1.2 3.6-.6 5 0 1.500.6 3 .8 5-.3v6.600c-2 1.100-3.500.900-5 .300-1.400-.600-3-1.200-5 0z"/><path d="M47.500 2c3.600 0 6.500 1.900 6.500 4.300s-2.900 4.300-6.500 4.300c-.700 0-1.400-.100-2-.200-1 .900-2.200 1.500-3.700 1.600.700-.700 1.100-1.500 1.200-2.400-1.200-.800-2-2-2-3.300 0-2.400 2.900-4.300 6.500-4.300z"/></g><g fill="#daeefe"><circle cx="44.800" cy="6.300" r=".8"/><circle cx="47.500" cy="6.300" r=".8"/><circle cx="50.200" cy="6.300" r=".8"/></g></svg><i class="abs" style="left:72px;top:12px;width:13px;height:13px;background:#fff;border:1px solid #767676;border-radius:2.5px"></i></div>
<div class="cell txt hatch code" style="left:135px;width:120px;">03.2200.1020</div>
<div class="cell txt desc" style="left:255px;width:225px;">Wire Mesh 4X4- W 1.4 Rolls</div>
<div class="cell num hatch" style="left:480px;width:100px;">81,786.65</div>
<div class="cell txt ph unit hatch" style="left:580px;width:70px;">SF<i class="tri"></i></div>
<div class="cell num" style="left:650px;width:125px;">0.18</div>
<div class="cell num" style="left:775px;width:125px;"></div>
<div class="cell num" style="left:900px;width:125px;"></div><div class="cell num" style="left:1025px;width:125px;"></div>
<div class="cell num hatch" style="left:1150px;width:150px;color:#444">14,721.60</div>
<div class="cell txt ph" style="left:1300px;width:200px;">04 Building Four<i class="tri"></i></div>
<div class="cell " style="left:1500px;width:60px;"><svg class="abs" style="left:15px;top:14px" width="10" height="10" viewBox="0 0 10 10"><path d="M1.400 1.400l7.200 7.200M8.600 1.400l-7.200 7.200" stroke="#9aa7c0" stroke-width="3" stroke-linecap="butt"/></svg></div><div class="cell " style="left:1560px;width:164px;border-right:0"></div>
</div>
<div class="row item" style="top:529px">
<div class="cell " style="left:0px;width:30px;"></div>
<div class="cell " style="left:30px;width:105px;"></div>
<div class="cell txt hatch code" style="left:135px;width:120px;">03.1000.1750</div>
<div class="cell txt desc" style="left:255px;width:225px;">Concrete Forming Crew</div>
<div class="cell num hatch" style="left:480px;width:100px;">65,429.32</div>
<div class="cell txt ph unit hatch" style="left:580px;width:70px;">SF<i class="tri"></i></div>
<div class="cell num" style="left:650px;width:125px;"></div>
<div class="cell num hatch" style="left:775px;width:125px;">157.45</div>
<div class="cell num" style="left:900px;width:125px;"></div><div class="cell num" style="left:1025px;width:125px;"></div>
<div class="cell num hatch" style="left:1150px;width:150px;color:#444">109,885.93</div>
<div class="cell txt ph" style="left:1300px;width:200px;">04 Building Four<i class="tri"></i></div>
<div class="cell " style="left:1500px;width:60px;"></div><div class="cell " style="left:1560px;width:164px;border-right:0"></div>
</div>
<div class="row item" style="top:566px">
<div class="cell " style="left:0px;width:30px;"></div>
<div class="cell " style="left:30px;width:105px;"></div>
<div class="cell txt hatch code" style="left:135px;width:120px;">03.3500.1020</div>
<div class="cell txt desc" style="left:255px;width:225px;">Concrete Finish Broom</div>
<div class="cell num hatch" style="left:480px;width:100px;">65,429.32</div>
<div class="cell txt ph unit hatch" style="left:580px;width:70px;">SF<i class="tri"></i></div>
<div class="cell num" style="left:650px;width:125px;"></div>
<div class="cell num" style="left:775px;width:125px;"></div>
<div class="cell num" style="left:900px;width:125px;">0.65</div><div class="cell num" style="left:1025px;width:125px;"></div>
<div class="cell num hatch" style="left:1150px;width:150px;color:#444">42,529.06</div>
<div class="cell txt ph" style="left:1300px;width:200px;">04 Building Four<i class="tri"></i></div>
<div class="cell " style="left:1500px;width:60px;"></div><div class="cell " style="left:1560px;width:164px;border-right:0"></div>
</div>
<div class="row item" style="top:603px">
<div class="cell " style="left:0px;width:30px;"></div>
<div class="cell " style="left:30px;width:105px;"></div>
<div class="cell txt hatch code" style="left:135px;width:120px;">03.1000.1220</div>
<div class="cell txt desc" style="left:255px;width:225px;">Edge Form 4"</div>
<div class="cell num hatch" style="left:480px;width:100px;">278.28</div>
<div class="cell txt ph unit hatch" style="left:580px;width:70px;">LF<i class="tri"></i></div>
<div class="cell num" style="left:650px;width:125px;">3.00</div>
<div class="cell num" style="left:775px;width:125px;"></div>
<div class="cell num" style="left:900px;width:125px;"></div><div class="cell num" style="left:1025px;width:125px;"></div>
<div class="cell num hatch" style="left:1150px;width:150px;color:#444">834.84</div>
<div class="cell txt ph" style="left:1300px;width:200px;">04 Building Four<i class="tri"></i></div>
<div class="cell " style="left:1500px;width:60px;"></div><div class="cell " style="left:1560px;width:164px;border-right:0"></div>
</div>
<div class="row item" style="top:640px">
<div class="cell " style="left:0px;width:30px;"></div>
<div class="cell " style="left:30px;width:105px;"></div>
<div class="cell txt hatch code" style="left:135px;width:120px;">03.1500.1670</div>
<div class="cell txt desc" style="left:255px;width:225px;">Wire Mesh Bolster Chairs</div>
<div class="cell num hatch" style="left:480px;width:100px;">16,357.33</div>
<div class="cell txt ph unit hatch" style="left:580px;width:70px;">EA<i class="tri"></i></div>
<div class="cell num" style="left:650px;width:125px;">0.28</div>
<div class="cell num" style="left:775px;width:125px;"></div>
<div class="cell num" style="left:900px;width:125px;"></div><div class="cell num" style="left:1025px;width:125px;"></div>
<div class="cell num hatch" style="left:1150px;width:150px;color:#444">4,580.05</div>
<div class="cell txt ph" style="left:1300px;width:200px;">04 Building Four<i class="tri"></i></div>
<div class="cell " style="left:1500px;width:60px;"></div><div class="cell " style="left:1560px;width:164px;border-right:0"></div>
</div>
<div class="row item" style="top:677px">
<div class="cell " style="left:0px;width:30px;"></div>
<div class="cell " style="left:30px;width:105px;"></div>
<div class="cell txt hatch code" style="left:135px;width:120px;">03.0125.0010</div>
<div class="cell txt desc" style="left:255px;width:225px;">Concrete Flooring Type 1</div>
<div class="cell num hatch" style="left:480px;width:100px;">71,972.25</div>
<div class="cell txt ph unit hatch" style="left:580px;width:70px;">SF<i class="tri"></i></div>
<div class="cell num" style="left:650px;width:125px;">5.00</div>
<div class="cell num" style="left:775px;width:125px;"></div>
<div class="cell num" style="left:900px;width:125px;"></div><div class="cell num" style="left:1025px;width:125px;"></div>
<div class="cell num hatch" style="left:1150px;width:150px;color:#444">359,861.25</div>
<div class="cell txt ph" style="left:1300px;width:200px;">04 Building Four<i class="tri"></i></div>
<div class="cell " style="left:1500px;width:60px;"></div><div class="cell " style="left:1560px;width:164px;border-right:0"></div>
</div>
<div class="row grp" style="top:714px"><i class="minus"></i><span style="left:137px;letter-spacing:.5px">07</span><span style="left:257px">Thermal and Moisture Protection</span><span style="right:433px;letter-spacing:0">10,599.55</span><span style="left:1301px;font-size:11.5px;letter-spacing:-0.3px">04 Building Four<i class="tri" style="border-top-color:#fff;margin:17px 0 0 12px"></i></span><i class="tail"></i></div>
<div class="row item" style="top:752px">
<div class="cell " style="left:0px;width:30px;"></div>
<div class="cell " style="left:30px;width:105px;"></div>
<div class="cell txt hatch code" style="left:135px;width:120px;">07.2600.1030</div>
<div class="cell txt desc" style="left:255px;width:225px;">10 Mill Visqueen Roll</div>
<div class="cell num hatch" style="left:480px;width:100px;">88,329.58</div>
<div class="cell txt ph unit hatch" style="left:580px;width:70px;">SF<i class="tri"></i></div>
<div class="cell num" style="left:650px;width:125px;">0.12</div>
<div class="cell num" style="left:775px;width:125px;"></div>
<div class="cell num" style="left:900px;width:125px;"></div><div class="cell num" style="left:1025px;width:125px;"></div>
<div class="cell num hatch" style="left:1150px;width:150px;color:#444">10,599.55</div>
<div class="cell txt ph" style="left:1300px;width:200px;">04 Building Four<i class="tri"></i></div>
<div class="cell " style="left:1500px;width:60px;"></div><div class="cell " style="left:1560px;width:164px;border-right:0"></div>
</div>
<div class="row grp" style="top:789px"><i class="minus"></i><span style="left:137px;letter-spacing:.5px">31</span><span style="left:257px">Earthwork</span><span style="right:433px;letter-spacing:0">49,071.99</span><span style="left:1301px;font-size:11.5px;letter-spacing:-0.3px">04 Building Four<i class="tri" style="border-top-color:#fff;margin:17px 0 0 12px"></i></span><i class="tail"></i></div>
<div class="row item" style="top:827px">
<div class="cell " style="left:0px;width:30px;"></div>
<div class="cell " style="left:30px;width:105px;"></div>
<div class="cell txt hatch code" style="left:135px;width:120px;">31.3100.1000</div>
<div class="cell txt desc" style="left:255px;width:225px;">Chemical Termite Control</div>
<div class="cell num hatch" style="left:480px;width:100px;">65,429.32</div>
<div class="cell txt ph unit hatch" style="left:580px;width:70px;">SF<i class="tri"></i></div>
<div class="cell num" style="left:650px;width:125px;"></div>
<div class="cell num" style="left:775px;width:125px;"></div>
<div class="cell num" style="left:900px;width:125px;">0.75</div><div class="cell num" style="left:1025px;width:125px;"></div>
<div class="cell num hatch" style="left:1150px;width:150px;color:#444">49,071.99</div>
<div class="cell txt ph" style="left:1300px;width:200px;">04 Building Four<i class="tri"></i></div>
<div class="cell " style="left:1500px;width:60px;"></div><div class="cell " style="left:1560px;width:164px;border-right:0"></div>
</div>
<div class="row grp" style="top:864px"><i class="minus"></i><span style="left:137px;letter-spacing:.5px">32</span><span style="left:257px">Exterior Improvements</span><span style="right:433px;letter-spacing:0">30,291.40</span><span style="left:1301px;font-size:11.5px;letter-spacing:-0.3px">04 Building Four<i class="tri" style="border-top-color:#fff;margin:17px 0 0 12px"></i></span><i class="tail"></i></div>
<div class="row item" style="top:902px">
<div class="cell " style="left:0px;width:30px;"></div>
<div class="cell " style="left:30px;width:105px;"></div>
<div class="cell txt hatch code" style="left:135px;width:120px;">32.1100.1150</div>
<div class="cell txt desc" style="left:255px;width:225px;">Crushed Gravel Base</div>
<div class="cell num hatch" style="left:480px;width:100px;">1,514.57</div>
<div class="cell txt ph unit hatch" style="left:580px;width:70px;">CY<i class="tri"></i></div>
<div class="cell num" style="left:650px;width:125px;">20.00</div>
<div class="cell num" style="left:775px;width:125px;"></div>
<div class="cell num" style="left:900px;width:125px;"></div><div class="cell num" style="left:1025px;width:125px;"></div>
<div class="cell num hatch" style="left:1150px;width:150px;color:#444">30,291.40</div>
<div class="cell txt ph" style="left:1300px;width:200px;">04 Building Four<i class="tri"></i></div>
<div class="cell " style="left:1500px;width:60px;"></div><div class="cell " style="left:1560px;width:164px;border-right:0"></div>
</div>
<div class="row grp" style="top:939px"><i class="minus"></i><span style="left:137px;letter-spacing:.5px">33</span><span style="left:257px">Utilities</span><span style="right:433px;letter-spacing:0">5,400.00</span><span style="left:1301px;font-size:11.5px;letter-spacing:-0.3px">02 Building Two<i class="tri" style="border-top-color:#fff;margin:17px 0 0 12px"></i></span><i class="tail"></i></div>
<div class="row item last" style="top:977px">
<div class="cell " style="left:0px;width:30px;"></div>
<div class="cell " style="left:30px;width:105px;"></div>
<div class="cell txt hatch code" style="left:135px;width:120px;">33.0500.1000</div>
<div class="cell txt desc" style="left:255px;width:225px;">3000 Psi Thrust Block Concrete</div>
<div class="cell num" style="left:480px;width:100px;">75.00</div>
<div class="cell txt ph unit" style="left:580px;width:70px;">CY<i class="tri"></i></div>
<div class="cell num" style="left:650px;width:125px;">72.00</div>
<div class="cell num" style="left:775px;width:125px;"></div>
<div class="cell num" style="left:900px;width:125px;"></div><div class="cell num" style="left:1025px;width:125px;"></div>
<div class="cell num hatch" style="left:1150px;width:150px;color:#444">5,400.00</div>
<div class="cell txt ph" style="left:1300px;width:200px;">02 Building Two<i class="tri"></i></div>
<div class="cell " style="left:1500px;width:60px;"></div><div class="cell " style="left:1560px;width:164px;border-right:0"></div>
</div>
<div id="vs"><i class="abs" style="left:5px;top:8px;width:0;height:0;border-left:3.5px solid transparent;border-right:3.5px solid transparent;border-bottom:4px solid #a3a3a3"></i><i class="abs" style="left:5px;top:875px;width:0;height:0;border-left:3.5px solid transparent;border-right:3.5px solid transparent;border-top:4px solid #a3a3a3"></i></div>
<div id="foot"><span class="abs" style="left:15px;top:1px">Man Hours: 3,652 &nbsp;|&nbsp; Crew Days: 282 &nbsp;|&nbsp; Size: 25,000/SF &nbsp;|&nbsp; Cost: $36.55/SF &nbsp;|&nbsp; Total: $48.69/SF &nbsp;|&nbsp; Profit Margin: 21% &nbsp;|</span><span class="abs" style="right:74px;font-size:13px;letter-spacing:-0.1px;color:#a1a6b0">powered by</span><b class="abs" style="right:20px;color:#151517;font-size:13.5px;letter-spacing:.9px;-webkit-text-stroke:.9px #151517">ProEst</b><svg class="abs" style="right:48px;top:10px" width="4" height="7" viewBox="0 0 4 7"><path d="M0 0h4L2.300 7h-.6z" fill="#2f8fd6"/></svg></div>
</body></html>
